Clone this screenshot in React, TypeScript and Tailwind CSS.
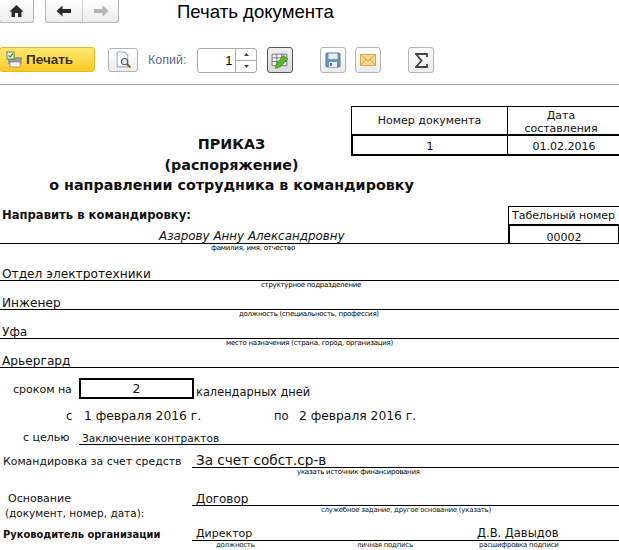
const doc = { fontFamily: '"DejaVu Sans", sans-serif' };

function Caption({ children, pl }: { children: string; pl: string }) {
  return (
    <div className={`h-[9px] text-[7px] leading-[9px] tracking-[-0.25px] whitespace-nowrap text-black ${pl}`}>
      {children}
    </div>
  );
}

function ToolBtn({ children, active }: { children: React.ReactNode; active?: boolean }) {
  return (
    <div
      className={
        active
          ? "w-[26px] h-[26px] flex items-center justify-center rounded-[3px] border border-[#555] bg-gradient-to-b from-[#f0f0f0] to-[#dcdcdc]"
          : "w-[26px] h-[26px] flex items-center justify-center rounded-[3px] border border-[#b5b5b5] bg-gradient-to-b from-white to-[#ececec]"
      }
    >
      {children}
    </div>
  );
}

export default function App() {
  return (
    <div className="w-[619px] h-[550px] overflow-hidden bg-white text-black" style={{ fontFamily: '"Liberation Sans", sans-serif' }}>
      {/* Верхняя панель */}
      <div className="h-[47px] flex items-start">
        <div className="w-[35px] h-[23px] -ml-[1px] flex items-center justify-center rounded-b-[3px] border border-t-0 border-[#b5b5b5] bg-gradient-to-b from-white to-[#ececec]">
          <svg width="15" height="14" viewBox="0 0 15 14">
            <path d="M7.5 1 L14.5 7.5 L12.5 7.5 L12.5 13 L9 13 L9 9 L6 9 L6 13 L2.5 13 L2.5 7.5 L0.5 7.5 Z" fill="#2b2b2b" />
          </svg>
        </div>
        <div className="ml-[11px] w-[74px] h-[23px] flex rounded-b-[3px] border border-t-0 border-[#b5b5b5] bg-gradient-to-b from-white to-[#ececec]">
          <div className="w-[37px] flex items-center justify-center border-r border-[#cfcfcf]">
            <svg width="16" height="12" viewBox="0 0 16 12">
              <path d="M6.5 0.5 L0.5 6 L6.5 11.5 L6.5 8 L15 8 L15 4 L6.5 4 Z" fill="#2b2b2b" />
            </svg>
          </div>
          <div className="flex-1 flex items-center justify-center">
            <svg width="16" height="12" viewBox="0 0 16 12">
              <path d="M9.5 0.5 L15.5 6 L9.5 11.5 L9.5 8 L1 8 L1 4 L9.5 4 Z" fill="#b4b4b4" />
            </svg>
          </div>
        </div>
        <div className="ml-[58px] mt-[1px] text-[18.6px] leading-[22px] whitespace-nowrap">Печать документа</div>
      </div>

      {/* Командная панель */}
      <div className="h-[38px] flex items-start border-b-[1px] border-[#a5a5a5]">
        <div className="w-[96px] h-[25px] -ml-[1px] flex items-center rounded-[3px] border border-[#e8b820] bg-gradient-to-b from-[#ffe96e] to-[#fdc91e]">
          <svg className="ml-[6px]" width="17" height="17" viewBox="0 0 17 17">
            <rect x="2" y="6" width="14" height="7" rx="1" fill="#9a9a9a" />
            <rect x="4" y="11" width="10" height="5" fill="#f4f4f4" stroke="#777" strokeWidth="0.6" />
            <rect x="1" y="1" width="7" height="7" fill="#fff" stroke="#5a8a3a" />
            <path d="M2.5 4.5 L4 6 L7 2.5" stroke="#2e9a2e" strokeWidth="1.3" fill="none" />
          </svg>
          <span className="ml-[3px] mt-[1px] text-[13.5px] font-bold text-[#3b3320]">Печать</span>
        </div>
        <div className="ml-[13px] mt-[1px] w-[30px] h-[24px] flex items-center justify-center rounded-[3px] border border-[#b5b5b5] bg-gradient-to-b from-white to-[#ececec]">
          <svg width="17" height="18" viewBox="0 0 16 17">
            <path d="M2 1 H9 L12 4 V15 H2 Z" fill="#fff" stroke="#8fb0cc" />
            <circle cx="9" cy="10" r="3" fill="#dfeaf2" stroke="#555" />
            <path d="M11 12 L14.5 15.5" stroke="#8a5a2a" strokeWidth="2" />
          </svg>
        </div>
        <div className="ml-[10px] mt-[6px] text-[12.5px] leading-[14px] text-[#5a6a8a]">Копий:</div>
        <div className="ml-[11px] mt-[1px] w-[60px] h-[25px] flex rounded-[3px] border border-[#aaa]">
          <div className="w-[38px] border-r border-[#aaa] text-right pr-[3px] text-[13px] leading-[23px]">1</div>
          <div className="flex-1 flex flex-col">
            <div className="h-[12px] border-b border-[#aaa] flex items-center justify-center">
              <svg width="5" height="3" viewBox="0 0 5 3"><path d="M2.5 0 L5 3 H0 Z" fill="#444" /></svg>
            </div>
            <div className="flex-1 flex items-center justify-center">
              <svg width="5" height="3" viewBox="0 0 5 3"><path d="M0 0 H5 L2.5 3 Z" fill="#444" /></svg>
            </div>
          </div>
        </div>
        <div className="ml-[10px]">
          <ToolBtn active>
            <svg width="18" height="17" viewBox="0 0 17 16">
              <path d="M1 2 H15 V13 H1 Z M1 5.5 H15 M1 9 H15 M5.5 2 V13 M10 2 V13" fill="#f5f5f5" stroke="#666" strokeWidth="0.8" />
              <path d="M4 15.5 L5 11 L12 3 L16 6.5 L9 14 Z" fill="#58b52e" stroke="#3c8a1e" strokeWidth="0.6" />
            </svg>
          </ToolBtn>
        </div>
        <div className="ml-[27px]">
          <ToolBtn>
            <svg width="16" height="16" viewBox="0 0 16 16">
              <rect x="1" y="1" width="14" height="14" rx="1" fill="#6f95b8" stroke="#54789c" />
              <rect x="3.5" y="1.5" width="9" height="5.5" fill="#e8eef4" />
              <rect x="4" y="10" width="8" height="5" fill="#e8eef4" />
              <rect x="5" y="11" width="2" height="3" fill="#54789c" />
            </svg>
          </ToolBtn>
        </div>
        <div className="ml-[9px]">
          <ToolBtn>
            <svg width="16" height="12" viewBox="0 0 16 12">
              <rect x="0.5" y="0.5" width="15" height="11" fill="#f7d48c" stroke="#dca64a" />
              <path d="M0.5 0.5 L8 7 L15.5 0.5 M0.5 11.5 L6 5.5 M15.5 11.5 L10 5.5" fill="none" stroke="#dca64a" />
            </svg>
          </ToolBtn>
        </div>
        <div className="ml-[27px]">
          <ToolBtn>
            <svg width="13" height="15" viewBox="0 0 13 15">
              <path d="M12 4 V1 H1 L6.5 7.5 L1 14 H12 V11" fill="none" stroke="#444" strokeWidth="1.8" />
            </svg>
          </ToolBtn>
        </div>
      </div>

      {/* Печатная форма */}
      <div style={doc} className="text-[#111]">
        <div className="h-[121px] pt-[21px] flex">
          <div className="w-[351px] shrink-0 pt-[28px] pl-[48px] text-center text-[14.3px] leading-[20.5px] font-bold">
            <div className="w-[367px]">ПРИКАЗ</div>
            <div className="w-[367px]">(распоряжение)</div>
            <div className="w-[367px] whitespace-nowrap">о направлении сотрудника в командировку</div>
          </div>
          <div className="shrink-0 w-[290px] h-[49px] text-[11px]">
            <div className="h-[28px] flex border border-b-0 border-black">
              <div className="w-[156px] border-r border-black text-center leading-[27px]">Номер документа</div>
              <div className="w-[106px] text-center leading-[13px] pt-[2px]">Дата<br />составления</div>
            </div>
            <div className="h-[22px] flex border-2 border-black">
              <div className="w-[155px] border-r border-black text-center leading-[21px]">1</div>
              <div className="w-[112px] text-center leading-[21px]">01.02.2016</div>
            </div>
          </div>
        </div>

        <div className="h-[38px] flex border-b border-black">
          <div className="w-[508px] shrink-0">
            <div className="pt-[2px] pl-[2px] text-[11.6px] leading-[14px] font-bold whitespace-nowrap">Направить в командировку:</div>
            <div className="pl-[159px] pt-[7px] text-[11.9px] leading-[15px] italic whitespace-nowrap">Азарову Анну Александровну</div>
          </div>
          <div className="w-[150px] shrink-0 flex flex-col">
            <div className="h-[18px] border border-b-0 border-black pl-[3px] text-[11px] leading-[18px] whitespace-nowrap">Табельный номер</div>
            <div className="h-[20px] w-[112px] border-2 border-b-0 border-black text-center text-[11px] leading-[24px]">00002</div>
          </div>
        </div>
        <Caption pl="pl-[211px]">фамилия, имя, отчество</Caption>

        <div className="h-[28px] flex items-end border-b border-black pl-[2px] text-[12.2px] leading-[11px]">Отдел электротехники</div>
        <Caption pl="pl-[261px]">структурное подразделение</Caption>
        <div className="h-[20px] flex items-end border-b border-black pl-[2px] text-[12.2px] leading-[11px]">Инженер</div>
        <Caption pl="pl-[239px]">должность (специальность, профессия)</Caption>
        <div className="h-[20px] flex items-end border-b border-black pl-[2px] text-[12.2px] leading-[11px]">Уфа</div>
        <Caption pl="pl-[226px]">место назначения (страна, город, организация)</Caption>
        <div className="h-[20px] flex items-end border-b border-black pl-[2px] text-[12.2px] leading-[11px]">Арьергард</div>

        <div className="h-[32px] pt-[10px] flex">
          <div className="w-[79px] pl-[13px] pt-[3px] text-[11px] leading-[17px] whitespace-nowrap">сроком на</div>
          <div className="w-[115px] h-[21px] border-2 border-black text-center text-[12.5px] leading-[18px]">2</div>
          <div className="pl-[2px] pt-[6px] text-[11.4px] leading-[17px] whitespace-nowrap">календарных дней</div>
        </div>
        <div className="h-[28px] flex pt-[8px] text-[12.3px] leading-[16px]">
          <div className="w-[84px] pl-[66px] text-[11.5px]">с</div>
          <div className="w-[190px]">1 февраля 2016 г.</div>
          <div className="w-[24px] text-[11.5px]">по</div>
          <div className="pl-[1px]">2 февраля 2016 г.</div>
        </div>

        <div className="h-[17px] flex items-end">
          <div className="w-[79px] pl-[23px] text-[11px] leading-[14px] shrink-0 whitespace-nowrap">с целью</div>
          <div className="flex-1 border-b border-black pl-[3px] leading-[12px] text-[10.5px] tracking-[0.1px]">Заключение контрактов</div>
        </div>
        <div className="h-[23px] flex items-end">
          <div className="w-[192px] pl-[3px] text-[10.9px] leading-[12px] whitespace-nowrap shrink-0">Командировка за счет средств</div>
          <div className="flex-1 border-b border-black pl-[4px] text-[13.6px] leading-[13px]">За счет собст.ср-в</div>
        </div>
        <Caption pl="pl-[297px]">указать источник финансирования</Caption>

        <div className="h-[29px] flex items-end">
          <div className="w-[192px] pl-[8px] text-[11px] leading-[14px] shrink-0">Основание</div>
          <div className="flex-1 border-b border-black pl-[4px] text-[12px] leading-[12px]">Договор</div>
        </div>
        <div className="h-[9px] flex">
          <div className="w-[321px] pl-[5px] text-[10.5px] leading-[14px] whitespace-nowrap">(документ, номер, дата):</div>
          <div className="text-[7px] leading-[9px] tracking-[-0.25px] whitespace-nowrap">служебное задание, другое основание (указать)</div>
        </div>

        <div className="h-[26px] flex items-end">
          <div className="w-[192px] pl-[3px] text-[9.9px] leading-[13px] font-bold whitespace-nowrap shrink-0">Руководитель организации</div>
          <div className="flex-1 flex border-b border-black leading-[13px]">
            <div className="w-[285px] pl-[4px] text-[11px]">Директор</div>
            <div className="text-[11.5px] whitespace-nowrap">Д.В. Давыдов</div>
          </div>
        </div>
        <div className="h-[9px] flex text-[7px] leading-[9px] tracking-[-0.25px] whitespace-nowrap">
          <div className="w-[216px]"></div>
          <div className="w-[141px]">должность</div>
          <div className="w-[122px]">личная подпись</div>
          <div>расшифровка подписи</div>
        </div>
      </div>
    </div>
  );
}
